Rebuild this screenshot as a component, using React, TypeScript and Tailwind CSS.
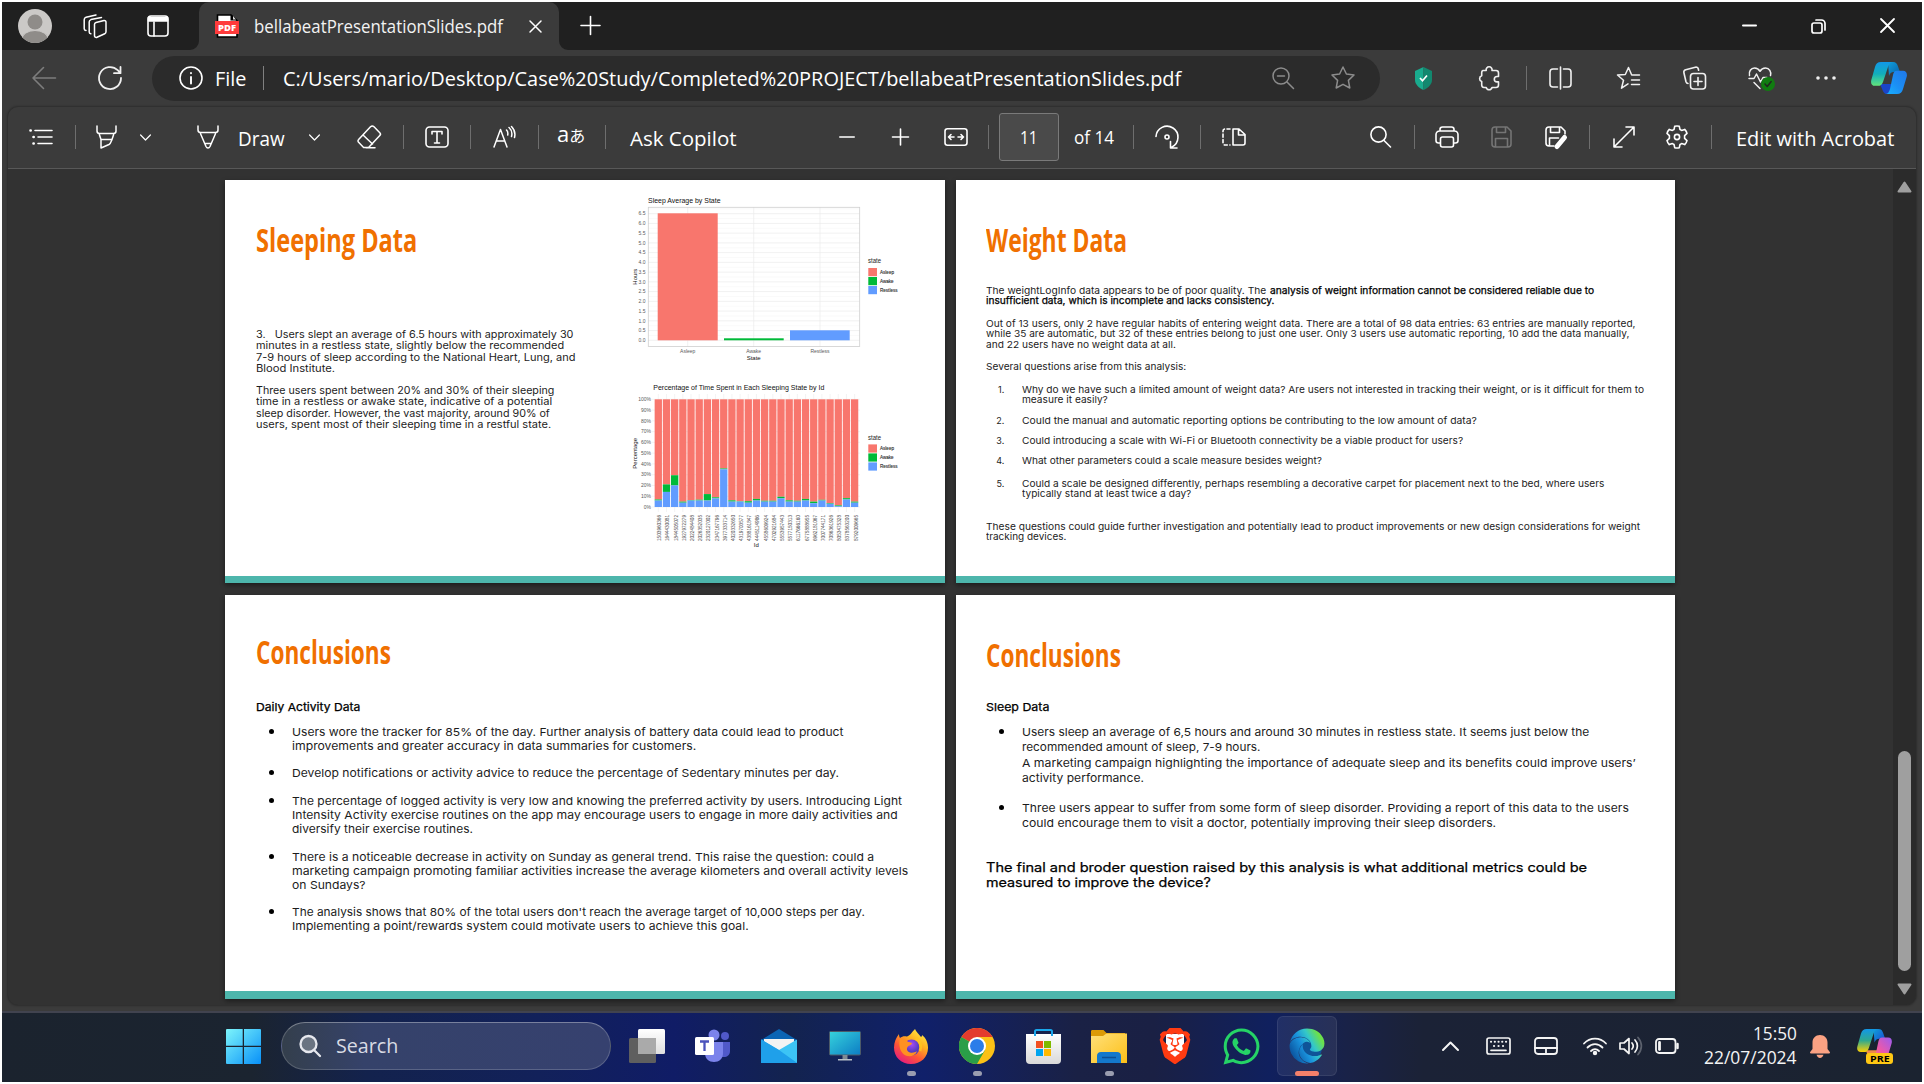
import { useLayoutEffect, useRef, useState } from 'react';
import type { ReactNode } from 'react';
import { FaWhatsapp, FaEdge } from 'react-icons/fa';
import { SiBrave } from 'react-icons/si';

/* Text stretched horizontally so that it fills a given width. */
function Fit({ w, className = '', children }: { w: number; className?: string; children: ReactNode }) {
  const ref = useRef<HTMLSpanElement>(null);
  const [scale, setScale] = useState(1);
  useLayoutEffect(() => {
    const measure = () => {
      if (ref.current && ref.current.offsetWidth) setScale(w / ref.current.offsetWidth);
    };
    measure();
    document.fonts?.ready.then(measure);
  }, [w]);
  return (
    <span className={`block shrink-0 whitespace-nowrap ${className}`} style={{ width: w }}>
      <span ref={ref} className="inline-block origin-left align-top" style={{ transform: `scaleX(${scale})` }}>
        {children}
      </span>
    </span>
  );
}

function Icon({ vb, className = '', sw = 1.6, children }: { vb: string; className?: string; sw?: number; children: ReactNode }) {
  return (
    <svg viewBox={vb} className={`shrink-0 overflow-visible ${className}`} fill="none" stroke="currentColor" strokeWidth={sw} strokeLinecap="round" strokeLinejoin="round">
      {children}
    </svg>
  );
}

const Sep = ({ className = '' }: { className?: string }) => <div className={`h-6 w-px shrink-0 bg-[#6e6e6e] ${className}`} />;

function TabStrip() {
  return (
    <div className="flex h-12 items-center bg-[#202020] text-white">
      <svg viewBox="0 0 34 34" className="ml-4 size-[34px] shrink-0">
        <defs><clipPath id="av"><circle cx="17" cy="17" r="17" /></clipPath></defs>
        <g clipPath="url(#av)">
          <rect width="34" height="34" fill="#cbc9c7" />
          <circle cx="17" cy="13" r="7.5" fill="#8f8c89" />
          <ellipse cx="17" cy="30" rx="13" ry="8.5" fill="#8f8c89" stroke="#cbc9c7" strokeWidth="1" />
        </g>
      </svg>
      <Icon vb="0 0 24 24" className="ml-[31px] size-6" sw={1.5}>
        <path d="M11.500 10.300c0-1 .6-1.700 1.500-1.900L21 6.500a1.700 1.700 0 0 1 2 1.700v9.600c0 1-.5 1.600-1.300 2L14 23.300a1.700 1.700 0 0 1-2.500-1.600z" />
        <path d="M7.800 19.800c-1-.2-1.600-.8-1.600-1.800V8c0-1.200.6-2 1.700-2.400L18.500 3.500" />
        <path d="M3 16.500c-1.300-.2-1.800-.8-1.800-1.800V5.700c0-1.200.5-2 1.800-2.400L13 1" />
      </Icon>
      <Icon vb="0 0 22 22" className="ml-10 size-[22px]" sw={1.6}>
        <rect x="1" y="1" width="20" height="20" rx="3" />
        <path d="M1.500 2.500h19v3.500h-19z" fill="currentColor" />
        <path d="M7 7v14" />
      </Icon>
      <div className="relative ml-[30px] flex h-12 w-[360px] items-center rounded-t-[10px] bg-[#3b3b3b] pl-4">
        <svg viewBox="0 0 10 10" className="absolute bottom-0 -left-[9px] size-[9px]"><path d="M10 0v10H0A10 10 0 0 0 10 0z" fill="#3b3b3b" /></svg>
        <svg viewBox="0 0 10 10" className="absolute bottom-0 -right-[9px] size-[9px]"><path d="M0 0v10h10A10 10 0 0 1 0 0z" fill="#3b3b3b" /></svg>
        <svg viewBox="0 0 24 24" className="size-6 shrink-0">
          <path d="M2.500 1h13.500l6 5.500V23h-19.500z" fill="#fff" stroke="#000" strokeWidth="1.600" />
          <path d="M15.500 0v6.500h7z" fill="#000" /><path d="M18 2l3 3.500h-3z" fill="#ddd" />
          <rect y="7" width="24" height="13" fill="#ff3b3b" />
          <text x="12" y="16.600" textAnchor="middle" fontSize="8.400" fontWeight="800" fontFamily="Open Sans, sans-serif" fill="#fff" textLength="18" lengthAdjust="spacingAndGlyphs">PDF</text>
        </svg>
        <Fit w={248.5} className="ml-[15px] text-[18px] leading-6 text-[#f2f2f2]">bellabeatPresentationSlides.pdf</Fit>
        <Icon vb="0 0 13 13" className="ml-[26px] size-[13px]" sw={1.5}><path d="M1 1l11 11M12 1 1 12" /></Icon>
      </div>
      <Icon vb="0 0 21 21" className="ml-[21px] size-[21px]" sw={1.6}><path d="M10.500.5v18M1 9.500h19" /></Icon>
      <Icon vb="0 0 15 15" className="ml-auto size-[15px]" sw={2}><path d="M1 6.500h13" /></Icon>
      <Icon vb="0 0 15 15" className="ml-[54px] size-[15px]" sw={1.7}><rect x="1" y="4" width="10" height="10" rx="2" /><path d="M5 1h5.500A3.500 3.500 0 0 1 14 4.500V11" /></Icon>
      <Icon vb="0 0 15 15" className="mr-[27px] ml-[54px] size-[15px]" sw={1.8}><path d="M1 0l13 13M14 0 1 13" /></Icon>
    </div>
  );
}

const Copilot = ({ id, warm, className }: { id: string; warm?: boolean; className: string }) => (
  <svg viewBox="0 0 36 32" className={`shrink-0 ${className}`}>
    <defs>
      <linearGradient id={`${id}a`} x1="0" y1="0" x2="0" y2="1">
        <stop offset="0" stopColor="#1297e8" /><stop offset=".5" stopColor={warm ? '#2fa98f' : '#12aebb'} /><stop offset="1" stopColor={warm ? '#ffd000' : '#63e57c'} />
      </linearGradient>
      <linearGradient id={`${id}b`} x1="1" y1="0" x2="0" y2="1">
        <stop offset="0" stopColor={warm ? '#9b5cf0' : '#2077e8'} /><stop offset=".55" stopColor={warm ? '#ee59a8' : '#1b8ff5'} /><stop offset="1" stopColor={warm ? '#ff8a5c' : '#18b4ff'} />
      </linearGradient>
      <linearGradient id={`${id}c`} x1="0" y1="0" x2="1" y2="1"><stop offset="0" stopColor="#0f9fdc" /><stop offset="1" stopColor={warm ? '#1c46cf' : '#0a5fa8'} /></linearGradient>
    </defs>
    <path d="M17 0h5c3 0 4 1.500 5 4.500L29 10h-6c-3 0-4 1.500-5 4z" fill={`url(#${id}c)`} />
    <path d="M9 22l9 0 4 0-3 9c-4 2-6 1-7.500-3z" fill={warm ? '#f08a4a' : '#1a45c8'} />
    <path d="M10 0h12c-3 0-4 2-5 5l-5 15c-1 3-2.500 3.800-5 3.800H4C.8 23.800-.5 21.500.3 18L4 5C5 1.800 6.500 0 10 0z" fill={`url(#${id}a)`} />
    <path d="M26 8.800h6c3.200 0 4.500 2.500 3.700 6L32 27c-1 3.200-2.500 5-6 5H14c3 0 4-2 5-5l3-14c.8-3 1.500-4.200 4-4.200z" fill={`url(#${id}b)`} />
  </svg>
);

function AddressBar() {
  return (
    <div className="flex h-[57px] items-center bg-[#3b3b3b] text-[#f0f0f0]">
      <Icon vb="0 0 24 24" className="ml-[30px] size-6 text-[#7d7d7d]" sw={1.6}><path d="M23.500 12H1M11.500 1.500 1 12l10.500 10.500" /></Icon>
      <Icon vb="0 0 24 24" className="ml-[42px] size-6" sw={1.8}><path d="M23 12a11 11 0 1 1-3.300-7.800L22.500 7M22.500 1v6.200h-6.500" /></Icon>
      <div className="ml-[30px] flex h-[45px] w-[1228px] items-center rounded-full bg-[#2b2b2b] pr-[25px] pl-[27px] text-[20.5px] text-white">
        <Icon vb="0 0 24 24" className="size-6" sw={1.6}><circle cx="12" cy="12" r="11" /><path d="M12 11v6.500M12 7v.2" strokeWidth="1.900" /></Icon>
        <Fit w={31} className="ml-3">File</Fit>
        <Sep className="ml-[17px] bg-[#808080]" />
        <Fit w={898.5} className="ml-[19px]">C:/Users/mario/Desktop/Case%20Study/Completed%20PROJECT/bellabeatPresentationSlides.pdf</Fit>
        <Icon vb="0 0 22 22" className="ml-auto size-[22px] text-[#8c8c8c]" sw={1.5}><circle cx="9" cy="9" r="8" /><path d="M15 15l6.500 6.500M5.500 9h7" /></Icon>
        <Icon vb="0 0 24 24" className="ml-[37px] size-6 text-[#8c8c8c]" sw={1.5}><path d="M12 1l3.400 7 7.600 1-5.600 5.400L18.800 22 12 18.300 5.200 22l1.400-7.600L1 9l7.600-1z" /></Icon>
      </div>
      <svg viewBox="0 0 17 23" className="ml-[35px] h-[23px] w-[17px] shrink-0"><path d="M8.500 0L0 4v9c0 4.500 4 8 8.500 10z" fill="#19ab8e" /><path d="M8.500 0L17 4v9c0 4.500-4 8-8.500 10z" fill="#12886f" /><path d="M5 11l2.500 2.800L12 8.500" stroke="#fff" strokeWidth="1.700" fill="none" /></svg>
      <Icon vb="0 0 22 24" className="ml-[46px] h-6 w-[22px]"><path d="M5 4.500h3.200a3 3 0 1 1 5.800 0H18a2.500 2.500 0 0 1 2.500 2.500v3.500h-1.500a2.700 2.700 0 0 0 0 5.400h1.500V19a2.500 2.500 0 0 1-2.500 2.500h-4a3 3 0 0 1-5.800 0H6A2.500 2.500 0 0 1 3.700 19v-3.500a3 3 0 0 1 0-5.700V6.500A2 2 0 0 1 5 4.500z" /></Icon>
      <Sep className="ml-[26px]" />
      <Icon vb="0 0 23 24" className="ml-[22px] h-6 w-[23px]"><path d="M8.500 3H4a3 3 0 0 0-3 3v12a3 3 0 0 0 3 3h4.500M14.500 3H19a3 3 0 0 1 3 3v12a3 3 0 0 1-3 3h-4.500M11.500 1v22" /></Icon>
      <Icon vb="0 0 25 24" className="ml-[44px] h-6 w-[25px]" sw={1.5}><path d="M23.500 9h-7.800l-3.200-7.500L9.300 8.500 1.500 9l6 5.200-2 8 6.500-4.400M15.500 14h8M15.500 18.500h8" /></Icon>
      <Icon vb="0 0 23 24" className="ml-[42px] h-6 w-[23px]"><rect x="7.500" y="7.500" width="15" height="15.500" rx="3" /><path d="M15 11.500v8M11 15.500h8M5 17.500c-1 0-1.700-.7-2-1.700L.9 6.700C.6 5.300 1.300 4.100 2.700 3.700l9.600-2.500c1.500-.4 2.700.4 3 1.800l.3 1.300" /></Icon>
      <Icon vb="0 0 27 25" className="ml-[42px] h-[25px] w-[27px]" sw={1.5}>
        <path d="M1.500 9.500C.5 5.500 3 2 6.500 2c2.800 0 4.500 1.500 5.500 3.300C13 3.500 14.800 2 17.500 2c3.800 0 6 3.700 5 7.500M1 12.500h5l2.500-4.500 4 8 2.500-4.500h4M6 16.500l6 6" />
        <circle cx="20" cy="18" r="7" fill="#107c10" stroke="none" /><path d="M17 18l2.200 2.500 4-5" stroke="#202820" />
      </Icon>
      <svg viewBox="0 0 20 4" className="ml-[41px] h-1 w-5 shrink-0" fill="currentColor"><circle cx="2" cy="2" r="1.800" /><circle cx="10" cy="2" r="1.800" /><circle cx="18" cy="2" r="1.800" /></svg>
      <Copilot id="cp" className="ml-[35px] h-8 w-9" />
    </div>
  );
}

const Chevron = ({ className }: { className: string }) => <Icon vb="0 0 11 7" className={`h-[7px] w-[11px] ${className}`} sw={1.2}><path d="M.6 1l4.900 5 4.900-5" /></Icon>;

function PdfToolbar() {
  return (
    <div className="flex h-[62px] shrink-0 items-center border-b border-[#585858] bg-[#3b3b3b] text-[20.5px] text-white">
      <Icon vb="0 0 24 16" className="ml-[21px] h-4 w-6"><path d="M6 1.500h17M9 8h14M9 14.500h14" /><path d="M1.500 1.500h.2M4.500 8h.2M4.500 14.500h.2" strokeWidth="2.600" /></Icon>
      <Sep className="ml-[22px]" />
      <Icon vb="0 0 21 24" className="ml-5 h-6 w-[21px]" sw={1.5}><path d="M1 1v5c0 1.500 1 2.500 2.500 2.500h14c1.500 0 2.500-1 2.500-2.500V1M3 8.500l2 6h11l2-6M5 14.500V23l8-3.500c1.500-.8 2.200-3 3-5" /></Icon>
      <Chevron className="ml-[23px]" />
      <Icon vb="0 0 22 24" className="ml-[46px] h-6 w-[22px]" sw={1.5}><path d="M1 1v4c0 1.500 1 2.500 2.500 2.500h15c1.500 0 2.500-1 2.500-2.500V1M3 7.500l6 14c1 2 3 2 4 0l6-14M8 18.500h6" /></Icon>
      <Fit w={47} className="ml-[19px] pt-px">Draw</Fit>
      <Chevron className="ml-6" />
      <Icon vb="0 0 24 24" className="ml-[37px] size-6" sw={1.5}><path d="M13.500 1.800 1.600 14.500c-.8.800-.8 2 0 2.800l5 5.200h5L22.800 10.500c.8-.8.800-2 0-2.800L17 1.800c-1-.9-2.500-.9-3.500 0zM6 10l9.500 9M9 22.700h9" /></Icon>
      <Sep className="ml-[22px]" />
      <Icon vb="0 0 24 22" className="ml-[21px] h-[22px] w-6"><rect x="1" y="1" width="22" height="20" rx="3.500" /><path d="M7 8V5.500h10V8M12 5.500V17M9.500 17h5" /></Icon>
      <Sep className="ml-[21px]" />
      <Icon vb="0 0 23 22" className="ml-[22px] h-[22px] w-[23px]" sw={1.5}><path d="M1 21 7.500 3.500 14 21M3.500 15h8M13.500 4c1.200 1.200 1.600 3 1.200 5M16 1.500c2.800 2.500 3.300 6 2.500 9M18.500.5c3 3 4 7 3 11" /></Icon>
      <Sep className="ml-[22px]" />
      <Fit w={28} className="ml-[18px] pb-1.5 text-[22px] leading-6"><span>a</span><span className="font-['Noto_Sans_CJK_JP'] text-[16px]">あ</span></Fit>
      <Sep className="ml-5" />
      <Fit w={107} className="ml-6 pt-px">Ask Copilot</Fit>
      <Icon vb="0 0 16 16" className="ml-[102px] size-4"><path d="M.8 8h14.400" /></Icon>
      <Icon vb="0 0 17 17" className="ml-[37px] size-[17px]"><path d="M.5 8h16M8.500 0v16" /></Icon>
      <Icon vb="0 0 24 18" className="ml-[35px] h-[18px] w-6"><rect x="1" y=".8" width="22" height="16.400" rx="2.500" /><path d="M10 9H4.500M7 6.500 4.500 9 7 11.500M14 9h5.500M17 6.500 19.500 9 17 11.500" /></Icon>
      <Sep className="ml-5" />
      <div className="ml-2.5 flex h-12 w-[60px] shrink-0 items-center justify-center rounded-[3px] border border-[#7a7a7a] bg-[#4a4a4a] text-[18px]"><Fit w={18}>11</Fit></div>
      <Fit w={40} className="ml-[15px] text-[18px]">of 14</Fit>
      <Sep className="ml-[19px]" />
      <Icon vb="0 0 24 24" className="ml-[21px] size-6"><path d="M1 11.500A11 11 0 1 1 17 22M15.500 16.500V23H22" /><circle cx="12" cy="12" r="2" /></Icon>
      <Sep className="ml-[21px]" />
      <Icon vb="0 0 24 18" className="ml-[21px] h-[18px] w-6"><path d="M11 1h6l6 5.500V15a2 2 0 0 1-2 2H11zM16.500 1v6H23" /><path d="M8 1H3a2 2 0 0 0-2 2v12a2 2 0 0 0 2 2h5" strokeDasharray="3 2.500" /></Icon>
      <Icon vb="0 0 21 22" className="ml-[124px] h-[22px] w-[21px]"><circle cx="8.500" cy="8.500" r="7.600" /><path d="M14 14.500l6.500 6.500" /></Icon>
      <Sep className="ml-[23px]" />
      <Icon vb="0 0 24 22" className="ml-5 h-[22px] w-6"><path d="M5 17H3.500A2.500 2.500 0 0 1 1 14.500V8.500A3.500 3.500 0 0 1 4.500 5h15A3.500 3.500 0 0 1 23 8.500v6a2.500 2.500 0 0 1-2.500 2.500H19M5 5V3.500C5 2 6 1 7.500 1h9C18 1 19 2 19 3.500V5" /><rect x="5.500" y="11" width="13" height="10" rx="2" /></Icon>
      <Icon vb="0 0 21 22" className="ml-8 h-[22px] w-[21px] text-[#757575]"><path d="M1 4a3 3 0 0 1 3-3h12l4 4v13a3 3 0 0 1-3 3H4a3 3 0 0 1-3-3zM5.500 1v5.500h9V1M4.500 21v-8.500h12V21" /></Icon>
      <Icon vb="0 0 22 22" className="ml-[33px] h-[22px] w-[22px]"><path d="M9 20H4a3 3 0 0 1-3-3V4a3 3 0 0 1 3-3h12l4 4v3M5.500 1v5.500h9V1M4.500 20v-8h9" /><path d="M12 20.500 19.500 11.500" strokeWidth="5" /></Icon>
      <Sep className="ml-[22px]" />
      <Icon vb="0 0 22 22" className="ml-[23px] size-[22px]"><path d="M1 21 21 1M13 1h8v8M1 13v8h8" /></Icon>
      <Icon vb="0 0 24 24" className="ml-[30px] size-6"><path d="M9.700 1.300c1.500-.4 3.100-.4 4.600 0l.7 3.200 1.600.9 3.100-1c1.100 1.100 1.900 2.500 2.300 4l-2.400 2.200v2.800l2.400 2.200c-.4 1.500-1.200 2.900-2.300 4l-3.100-1-1.600.9-.7 3.200c-1.500.4-3.100.4-4.600 0L9 19.500l-1.600-.9-3.100 1c-1.100-1.100-1.900-2.500-2.300-4l2.400-2.200v-2.800L2 8.400c.4-1.500 1.200-2.900 2.300-4l3.100 1L9 4.500z" /><circle cx="12" cy="12" r="2.600" /></Icon>
      <Sep className="ml-[22px]" />
      <Fit w={158.5} className="ml-6 pt-px">Edit with Acrobat</Fit>
    </div>
  );
}

/* ---------- charts ---------- */
const RED = '#f8766d';
const GREEN = '#00ba38';
const BLUE = '#619cff';

const nights: [string, number, number][] = [
  ['1503960366', 6, 7], ['1644430081', 14, 21], ['1844505072', 20, 29.5], ['1927972279', 4, 5], ['2022484408', 6, 6.5],
  ['2026352035', 6, 6.8], ['2320127002', 6, 12], ['2347167796', 8, 9], ['3977333714', 35, 35.8], ['4020332650', 5, 6.2],
  ['4319703577', 5, 5.4], ['4388161847', 4, 5.4], ['4445114986', 6, 7.5], ['4558609924', 5, 5.8], ['4702921684', 5, 5.8],
  ['5553957443', 8, 9.5], ['5577150313', 5, 6.2], ['6117666160', 5, 5.8], ['6775888955', 6, 7.5], ['6962181067', 3.5, 5],
  ['7007744171', 6, 6.7], ['7086361926', 3, 3.6], ['8053475328', 0.7, 1.5], ['8378563200', 7, 8.2], ['8792009665', 4, 5],
];

function Legend({ y }: { y: number }) {
  return (
    <g fill="#222">
      <text x="868" y={y} fontSize="6.500" textLength="13" lengthAdjust="spacingAndGlyphs">state</text>
      {[['Asleep', RED, 14], ['Awake', GREEN, 13.5], ['Restless', BLUE, 17.5]].map(([n, c, w], i) => (
        <g key={n}>
          <rect x="868.300" y={y + 4.7 + i * 9} width="8.700" height="8.200" fill={c as string} />
          <text x="880" y={y + 10.5 + i * 9} fontSize="5" textLength={w} lengthAdjust="spacingAndGlyphs" stroke="#222" strokeWidth=".1">{n}</text>
        </g>
      ))}
    </g>
  );
}

function Charts() {
  const y1 = (v: number) => 340.3 - v * 19.48;
  const y2 = (p: number) => 507 - p * 1.077;
  return (
    <svg viewBox="625 190 320 370" className="mt-2.5 h-[370px] w-[320px] shrink-0" fontFamily="Liberation Sans, Arial, sans-serif">
      <text x="648" y="203" fontSize="7.300" textLength="72.500" lengthAdjust="spacingAndGlyphs" fill="#111">Sleep Average by State</text>
      {Array.from({ length: 14 }, (_, i) => (
        <g key={i}>
          <path d={`M648 ${y1(i / 2)}H859.700`} stroke="#ebebeb" strokeWidth=".7" />
          <path d={`M648 ${y1(i / 2 + 0.25)}H859.700`} stroke="#f4f4f4" strokeWidth=".5" />
          <text x="645.500" y={y1(i / 2) + 1.8} fontSize="5" textAnchor="end" fill="#5a5a5a">{(i / 2).toFixed(1)}</text>
        </g>
      ))}
      <path d="M687.700 207v140M753.700 207v140M820 207v140" stroke="#ebebeb" strokeWidth=".7" />
      <rect x="648.300" y="207.300" width="211.400" height="139.200" fill="none" stroke="#cfcfcf" strokeWidth=".8" />
      <rect x="657.700" y="213.300" width="60" height="127" fill={RED} />
      <rect x="724" y="338.300" width="59.700" height="2" fill={GREEN} />
      <rect x="790" y="330.300" width="59.700" height="10" fill={BLUE} />
      <g fontSize="5" textAnchor="middle" fill="#5a5a5a">
        <text x="687.700" y="352.800">Asleep</text><text x="753.700" y="352.800">Awake</text><text x="820" y="352.800">Restless</text>
      </g>
      <text x="753.700" y="359.700" fontSize="6" textAnchor="middle" fill="#111">State</text>
      <text transform="translate(636.500 276.700) rotate(-90)" fontSize="6" textAnchor="middle" fill="#111">Hours</text>
      <Legend y={263.3} />

      <text x="653.300" y="389.500" fontSize="7.300" textLength="171" lengthAdjust="spacingAndGlyphs" fill="#111">Percentage of Time Spent in Each Sleeping State by Id</text>
      {Array.from({ length: 11 }, (_, i) => (
        <g key={i}>
          <path d={`M652 ${y2(i * 10)}H860`} stroke="#ebebeb" strokeWidth=".6" />
          <text x="651" y={y2(i * 10) + 1.8} fontSize="5" textAnchor="end" fill="#5a5a5a">{i * 10}%</text>
        </g>
      ))}
      {nights.map(([id, restless, awake], i) => {
        const cx = 658.3 + i * 8.18;
        return (
          <g key={id}>
            <path d={`M${cx} 394V512`} stroke="#ebebeb" strokeWidth=".6" />
            <rect x={cx - 3.65} y={y2(100)} width="7.300" height={y2(awake) - y2(100)} fill={RED} />
            <rect x={cx - 3.65} y={y2(awake)} width="7.300" height={y2(restless) - y2(awake)} fill={GREEN} />
            <rect x={cx - 3.65} y={y2(restless)} width="7.300" height={y2(0) - y2(restless)} fill={BLUE} />
            <text transform={`translate(${cx + 3} 541) rotate(-90)`} fontSize="4.800" textLength="26" lengthAdjust="spacingAndGlyphs" fill="#4a4a4a">{id}</text>
          </g>
        );
      })}
      <text x="756.300" y="546.500" fontSize="6" textAnchor="middle" fill="#111">Id</text>
      <text transform="translate(636.500 453.300) rotate(-90)" fontSize="6" textAnchor="middle" fill="#111">Percentage</text>
      <Legend y={439.7} />
    </svg>
  );
}

/* ---------- slides ---------- */
const Title = ({ w, children }: { w: number; children: string }) => (
  <Fit w={w} className="h-10 font-['Open_Sans'] text-[31.5px] leading-10 font-bold text-[#f07000]">{children}</Fit>
);

type L = [string, number];
const Lines = ({ lines, className = '' }: { lines: L[]; className?: string }) => (
  <div className={className}>{lines.map(([t, w]) => <Fit key={t} w={w}>{t}</Fit>)}</div>
);
const Bullet = ({ lines, className = '' }: { lines: L[]; className?: string }) => (
  <div className={`flex ${className}`}>
    <div className="mt-[4.5px] mr-[18.5px] ml-[12.5px] size-[5px] shrink-0 rounded-full bg-black" />
    <Lines lines={lines} />
  </div>
);
const Numbered = ({ n, lines, className = '' }: { n: number; lines: L[]; className?: string }) => (
  <div className={`flex ${className}`}>
    <div className="mr-[18px] w-[18px] shrink-0 text-right text-[9px]">{n}.</div>
    <Lines lines={lines} />
  </div>
);

const slide = "flex flex-col justify-between bg-white text-[#1c1c1c] shadow-[0_2px_5px_rgba(0,0,0,0.45)] font-['Inter']";
const strong = 'text-black [-webkit-text-stroke:0.25px_#000]';

function Slides() {
  return (
    <div className="grid w-[1450px] grid-cols-[720px_719px] grid-rows-[403px_404px] gap-x-[11px] gap-y-3">
      <section className={slide}>
        <div className="flex h-[396px] justify-between">
          <div className="pt-10 pl-[30.5px] text-[10.5px] leading-[11.6px]">
            <Title w={161}>Sleeping Data</Title>
            <Lines className="mt-[68.6px] whitespace-pre" lines={[['3.\u00a0\u00a0\u00a0Users slept an average of 6.5 hours with approximately 30', 317], ['minutes in a restless state, slightly below the recommended', 308], ['7-9 hours of sleep according to the National Heart, Lung, and', 320], ['Blood Institute.', 79]]} />
            <Lines className="mt-[9.6px]" lines={[['Three users spent between 20% and 30% of their sleeping', 298], ['time in a restless or awake state, indicative of a potential', 296], ['sleep disorder. However, the vast majority, around 90% of', 294], ['users, spent most of their sleeping time in a restful state.', 295]]} />
          </div>
          <Charts />
        </div>
        <div className="h-[7px] bg-[#4db6ac]" />
      </section>

      <section className={slide}>
        <div className="pt-10 pl-[30.3px] text-[9.6px] leading-[10px]">
          <Title w={141}>Weight Data</Title>
          <div className="mt-[26px] flex">
            <Fit w={280.5} className="mr-[3px]">The weightLogInfo data appears to be of poor quality. The</Fit>
            <Fit w={324} className={strong}>analysis of weight information cannot be considered reliable due to</Fit>
          </div>
          <Fit w={288.4} className={strong}>insufficient data, which is incomplete and lacks consistency.</Fit>
          <Lines className="mt-[13px] leading-[10.5px]" lines={[['Out of 13 users, only 2 have regular habits of entering weight data. There are a total of 98 data entries: 63 entries are manually reported,', 649.5], ['while 35 are automatic, but 32 of these entries belong to just one user. Only 3 users use automatic reporting, 10 add the data manually,', 643], ['and 22 users have no weight data at all.', 190]]} />
          <Lines className="mt-[11.5px]" lines={[['Several questions arise from this analysis:', 200]]} />
          <Numbered n={1} className="mt-[13px]" lines={[['Why do we have such a limited amount of weight data? Are users not interested in tracking their weight, or is it difficult for them to', 622], ['measure it easily?', 85.5]]} />
          <Numbered n={2} className="mt-[11px]" lines={[['Could the manual and automatic reporting options be contributing to the low amount of data?', 454.5]]} />
          <Numbered n={3} className="mt-2.5" lines={[['Could introducing a scale with Wi-Fi or Bluetooth connectivity be a viable product for users?', 441.3]]} />
          <Numbered n={4} className="mt-2.5" lines={[['What other parameters could a scale measure besides weight?', 300]]} />
          <Numbered n={5} className="mt-[13px]" lines={[['Could a scale be designed differently, perhaps resembling a decorative carpet for placement next to the bed, where users', 582], ['typically stand at least twice a day?', 169.5]]} />
          <Lines className="mt-[23px] leading-[10.5px]" lines={[['These questions could guide further investigation and potentially lead to product improvements or new design considerations for weight', 654.5], ['tracking devices.', 80]]} />
        </div>
        <div className="h-[7px] bg-[#4db6ac]" />
      </section>

      <section className={slide}>
        <div className="pt-[37px] pl-[31px] text-[11px] leading-[14px]">
          <Title w={135}>Conclusions</Title>
          <Fit w={104.5} className={`mt-7 ${strong}`}>Daily Activity Data</Fit>
          <Bullet className="mt-[11px]" lines={[['Users wore the tracker for 85% of the day. Further analysis of battery data could lead to product', 552], ['improvements and greater accuracy in data summaries for customers.', 404]]} />
          <Bullet className="mt-[13px]" lines={[['Develop notifications or activity advice to reduce the percentage of Sedentary minutes per day.', 547.5]]} />
          <Bullet className="mt-3.5" lines={[['The percentage of logged activity is very low and knowing the preferred activity by users. Introducing Light', 610.3], ['Intensity Activity exercise routines on the app may encourage users to engage in more daily activities and', 606], ['diversify their exercise routines.', 181]]} />
          <Bullet className="mt-3.5" lines={[['There is a noticeable decrease in activity on Sunday as general trend. This raise the question: could a', 582], ['marketing campaign promoting familiar activities increase the average kilometers and overall activity levels', 616.3], ['on Sundays?', 74]]} />
          <Bullet className="mt-[13px]" lines={[["The analysis shows that 80% of the total users don't reach the average target of 10,000 steps per day.", 573], ['Implementing a point/rewards system could motivate users to achieve this goal.', 456.3]]} />
        </div>
        <div className="h-2 bg-[#4db6ac]" />
      </section>

      <section className={slide}>
        <div className="pt-10 pl-[30.3px] text-[11px] leading-[15px]">
          <Title w={135}>Conclusions</Title>
          <Fit w={63} className={`mt-[25px] ${strong}`}>Sleep Data</Fit>
          <Bullet className="mt-2.5" lines={[['Users sleep an average of 6,5 hours and around 30 minutes in restless state. It seems just below the', 567.3], ['recommended amount of sleep, 7-9 hours.', 239]]} />
          <Lines className="mt-px pl-9" lines={[['A marketing campaign highlighting the importance of adequate sleep and its benefits could improve users’', 614], ['activity performance.', 122]]} />
          <Bullet className="mt-[15px]" lines={[['Three users appear to suffer from some form of sleep disorder. Providing a report of this data to the users', 607], ['could encourage them to visit a doctor, potentially improving their sleep disorders.', 474.3]]} />
          <Lines className={`mt-[29px] text-[12.8px] ${strong}`} lines={[['The final and broder question raised by this analysis is what additional metrics could be', 601.5], ['measured to improve the device?', 225]]} />
        </div>
        <div className="h-2 bg-[#4db6ac]" />
      </section>
    </div>
  );
}

function Viewer() {
  return (
    <div className="flex h-[905px] flex-col bg-[#3b3b3b] px-1.5">
      <div className="flex h-[898px] flex-col overflow-hidden rounded-[10px] bg-[#323232] shadow-[0_0_2px_1px_rgba(0,0,0,0.25)]">
        <PdfToolbar />
        <div className="flex min-h-0 flex-1 justify-between">
          <div className="pt-[11px] pl-[217px]"><Slides /></div>
          <div className="flex w-[23px] flex-col items-center bg-[#2b2b2b] pt-3 pb-2.5">
            <svg viewBox="0 0 15 12" className="h-3 w-[15px]"><path d="M7.500 1.500 13.500 10.500h-12z" fill="#9f9f9f" stroke="#9f9f9f" strokeWidth="2" strokeLinejoin="round" /></svg>
            <div className="mt-auto h-[220px] w-[13px] rounded-full bg-[#9f9f9f]" />
            <svg viewBox="0 0 15 12" className="mt-3 h-3 w-[15px]"><path d="M7.500 10.500 13.500 1.500h-12z" fill="#9f9f9f" stroke="#9f9f9f" strokeWidth="2" strokeLinejoin="round" /></svg>
          </div>
        </div>
      </div>
    </div>
  );
}

/* ---------- taskbar ---------- */
function Cell({ children, dot }: { children: ReactNode; dot?: boolean }) {
  return (
    <div className="relative flex h-[70px] w-[66px] shrink-0 items-center justify-center pb-[3px]">
      {children}
      {dot && <div className="absolute bottom-[7px] h-[5px] w-[9px] rounded-full bg-[#9a9db0]" />}
    </div>
  );
}

function Taskbar() {
  return (
    <div className="flex h-[71px] items-center border-t-2 border-[#41434f] bg-[linear-gradient(90deg,#1b232e_0%,#1b2430_13%,#13224d_19%,#12215a_28%,#101c66_35%,#13234f_41%,#10206a_48%,#1a2145_56%,#1a2044_60%,#10205e_66%,#192248_70%,#1b2236_74%,#1b2330_100%)]">
      <svg viewBox="0 0 35 35" className="mb-[3px] ml-56 size-[35px] shrink-0">
        <defs><linearGradient id="win" x1="0" y1="0" x2="1" y2="1"><stop offset="0" stopColor="#7df5fb" /><stop offset="1" stopColor="#0890f8" /></linearGradient></defs>
        <path d="M1 0h15.700v16.700H0V1a1 1 0 0 1 1-1zM18 0h16a1 1 0 0 1 1 1v15.700H18zM0 18h16.700v17H1a1 1 0 0 1-1-1zM18 18h17v16a1 1 0 0 1-1 1H18z" fill="url(#win)" />
      </svg>
      <div className="mb-[3px] ml-5 flex h-12 w-[330px] shrink-0 items-center rounded-full border border-[#ffffff2e] border-t-[#ffffff55] bg-[linear-gradient(90deg,#343f4c,#35426a_25%,#36416f)] pl-[17px] text-[20px] text-[#d8dbe4]">
        <Icon vb="0 0 22 22" className="size-[22px] text-[#e6e8ee]" sw={2.3}><circle cx="9.500" cy="9" r="8" fill="#6a7482" /><path d="M15 15l6 6" /></Icon>
        <Fit w={62} className="ml-[15px]">Search</Fit>
      </div>
      <div className="ml-[3px] flex">
        <Cell>
          <svg viewBox="0 0 36 34" className="h-[34px] w-9"><defs><linearGradient id="tv" x2="0" y2="1"><stop stopColor="#fff" /><stop offset="1" stopColor="#dedede" /></linearGradient></defs><rect y="9" width="27" height="25" rx="1.500" fill="#5f5f5f" /><rect x="9" width="27" height="25" rx="1.500" fill="url(#tv)" /><path d="M9 9h18v16H9z" fill="#aaa" /></svg>
        </Cell>
        <Cell>
          <svg viewBox="0 0 36 34" className="h-[34px] w-9"><circle cx="30" cy="7" r="4" fill="#5059c9" /><path d="M24 13h11v9c0 4-3 6-6 6h-5z" fill="#5059c9" /><circle cx="19" cy="6" r="5.500" fill="#7b83eb" /><path d="M10 13h18v11c0 6-4 9-9 9s-9-3-9-9z" fill="#7b83eb" /><rect y="8" width="19" height="18" rx="1.500" fill="#fff" /><path d="M5 12.500h9M9.500 12.500V22" stroke="#4b53bc" strokeWidth="2.300" /></svg>
        </Cell>
        <Cell>
          <svg viewBox="0 0 36 34" className="h-[34px] w-9"><path d="M0 11 18 0l18 11v6H0z" fill="#0a64b4" /><path d="M3 10h30v14H3z" fill="#f3f3f3" /><path d="M0 10.500 18 21l18-10.500V34H0z" fill="#3cc4f5" /><path d="M0 10.500 36 34H0z" fill="#1e93e4" /><path d="M0 10.500 18 21 36 34H0z" fill="#1fa0ea" /></svg>
        </Cell>
        <Cell>
          <svg viewBox="0 0 32 30" className="h-[30px] w-8"><defs><linearGradient id="mon" x2="1" y2="1"><stop stopColor="#36d3dc" /><stop offset="1" stopColor="#0c7cc4" /></linearGradient></defs><rect x=".5" y=".5" width="31" height="23.500" rx="1" fill="url(#mon)" stroke="#4c5a68" /><path d="M13.500 24h5v4h-5z" fill="#7f8a94" /><path d="M9 28h14v1.500H9z" fill="#b8c0c8" /></svg>
        </Cell>
        <Cell dot>
          <svg viewBox="0 0 34 35" className="h-[35px] w-[34px]">
            <defs>
              <linearGradient id="ff" x1=".85" y1="0" x2=".2" y2="1"><stop stopColor="#fff14a" /><stop offset=".35" stopColor="#ffb11f" /><stop offset=".65" stopColor="#ff5635" /><stop offset="1" stopColor="#e31587" /></linearGradient>
              <radialGradient id="ffp" cx=".5" cy=".3"><stop stopColor="#a94bf5" /><stop offset="1" stopColor="#4f3bbf" /></radialGradient>
            </defs>
            <path d="M21 0c1 3 4 5 6 8 1-.5 1-1.500 1-2 4 3 6 8 6 13 0 9-7 16-17 16S0 28 0 18.500C0 13 2 9 5 5c0 2 .5 3 1 4 2-1.500 4-2 6.500-1.500C16 7 18 3 21 0z" fill="url(#ff)" />
            <circle cx="17.500" cy="18.500" r="8" fill="url(#ffp)" />
            <path d="M6 10c3-1 7 1 8 3 1.500 0 3.500.5 4 1.500-.5 1.500-3 2-4 3-2 2-1 5 2 6 3 .8 5-.5 7-1-2 5-9 6-13 3C5.500 22 4.500 15 6 10z" fill="#ff9121" />
            <path d="M22 9c4 3 6 8 4 13" stroke="#ffc61f" strokeWidth="3" fill="none" opacity=".8" />
          </svg>
        </Cell>
        <Cell dot>
          <svg viewBox="-18 -18 36 36" className="size-9">
            <circle r="18" fill="#fbc116" />
            <path d="M0 0-15.600-9A18 18 0 0 1 15.600-9H0z" fill="#e33b2e" />
            <path d="M0 0-15.600-9A18 18 0 0 0 0 18L7.800 4.500z" fill="#2a9e48" />
            <circle r="9" fill="#fff" /><circle r="7" fill="#2b7de9" />
          </svg>
        </Cell>
        <Cell>
          <svg viewBox="0 0 35 35" className="size-[35px]"><defs><linearGradient id="st" x2="0" y2="1"><stop stopColor="#fff" /><stop offset="1" stopColor="#d9d9d9" /></linearGradient></defs><path d="M0 5h35v26a4 4 0 0 1-4 4H4a4 4 0 0 1-4-4z" fill="url(#st)" /><path d="M9 7V2.500Q9 1 10.500 1h14Q26 1 26 2.500V7" fill="none" stroke="#1aa7ec" strokeWidth="2" /><path d="M10 12h7v7h-7z" fill="#f25022" /><path d="M18 12h7v7h-7z" fill="#7fba00" /><path d="M10 20h7v7h-7z" fill="#00a4ef" /><path d="M18 20h7v7h-7z" fill="#ffb900" /></svg>
        </Cell>
        <Cell dot>
          <svg viewBox="0 0 36 33" className="h-[33px] w-9"><defs><linearGradient id="fo" x2="1" y2="1"><stop stopColor="#ffe07a" /><stop offset="1" stopColor="#fcbf17" /></linearGradient></defs><path d="M0 1.500C0 .5.500 0 1.500 0h11l3 3H34v6H0z" fill="#dc9a06" /><path d="M0 6h12l3.500-2.500H36V33H0z" fill="url(#fo)" /><path d="M6 33v-7c0-2.500 1.500-4 4-4h16c2.500 0 4 1.500 4 4v7z" fill="#1478cc" /><path d="M11 27.500h14" stroke="#0c4f94" strokeWidth="1.500" /></svg>
        </Cell>
        <Cell>
          <div className="relative size-9">
            <div className="absolute inset-x-[9px] inset-y-[6px] rounded-b-full bg-white" />
            <SiBrave className="relative size-9 text-[#ff3b12]" />
          </div>
        </Cell>
        <Cell><FaWhatsapp className="size-[41px] text-[#25d366]" /></Cell>
        <div className="relative flex h-[70px] w-[66px] items-center justify-center pb-[3px]">
          <div className="absolute top-[3px] h-[60px] w-[60px] rounded-md border border-[#ffffff14] bg-[#ffffff12]" />
          <svg className="absolute size-0"><defs><linearGradient id="edg" x1=".9" y1=".3" x2=".1" y2=".75"><stop stopColor="#6be04b" /><stop offset=".3" stopColor="#34c8c8" /><stop offset=".6" stopColor="#1a93dd" /><stop offset="1" stopColor="#0c59a4" /></linearGradient></defs></svg>
          <div className="absolute top-[23px] left-[24px] size-6 rounded-full bg-[#0f5498]" />
          <FaEdge className="relative size-9" fill="url(#edg)" />
          <div className="absolute bottom-[7px] h-[5px] w-6 rounded-full bg-[#f4806a]" />
        </div>
      </div>
      <div className="mr-[30px] ml-auto flex items-center pb-[3px] text-[#f4f4f4]">
        <Icon vb="0 0 17 10" className="h-2.5 w-[17px]" sw={2}><path d="M1 9l7.500-7.500L16 9" /></Icon>
        <Icon vb="0 0 25 18" className="ml-[27px] h-[18px] w-[25px]" sw={1.7}><rect x="1" y="1" width="23" height="16" rx="2" /><path d="M5 13.300h15" /><path d="M5 4.800h.1M8.800 4.800h.1M12.500 4.800h.1M16.200 4.800h.1M20 4.800h.1M8 9h.1M12.500 9h.1M17 9h.1" strokeWidth="2.100" /></Icon>
        <Icon vb="0 0 24 18" className="ml-[23px] h-[18px] w-6" sw={1.8}><rect x="1" y="1" width="22" height="16" rx="3" /><path d="M1 11h22M12 11v6" /></Icon>
        <Icon vb="0 0 24 18" className="ml-[25px] h-[18px] w-6" sw={1.8}><path d="M1 6.500c6-6.500 16-6.500 22 0M4.500 10.500c4.500-4.600 10.500-4.600 15 0M8 14c2.500-2.500 5.500-2.500 8 0" /><circle cx="12" cy="16" r="1.300" fill="currentColor" /></Icon>
        <Icon vb="0 0 23 18" className="ml-3 h-[18px] w-[23px]" sw={1.7}><path d="M1 6v6h4l5 4.500v-15L5 6zM13 6c1.500 1.800 1.500 4.200 0 6M16 3c3.200 3.500 3.200 8.500 0 12" /><path d="M19 .5c4.500 5 4.500 12 0 17" opacity=".3" /></Icon>
        <Icon vb="0 0 24 16" className="ml-[13px] h-4 w-6" sw={1.8}><rect x="1" y="1" width="19.500" height="14" rx="3" /><path d="M4.500 4.500v7" strokeWidth="2.800" /><path d="M22.500 6v4" strokeWidth="2.500" /></Icon>
        <div className="ml-[25px] flex w-[93px] flex-col items-end pb-[3px] text-[18px] leading-6"><Fit w={44}>15:50</Fit><Fit w={93}>22/07/2024</Fit></div>
        <svg viewBox="0 0 20 23" className="ml-[13px] h-[23px] w-5" fill="#fba283"><path d="M10 0c4.500 0 7.500 3.300 7.500 7.500v6.500l2.300 3c.5.800.1 1.500-.8 1.500H1c-.9 0-1.300-.7-.8-1.500l2.300-3V7.500C2.500 3.300 5.500 0 10 0zM6.500 19.800h7c-.5 2-1.800 3.200-3.500 3.200s-3-1.200-3.500-3.200z" /></svg>
        <div className="relative ml-[27px] h-[35px] w-[35px]">
          <Copilot id="pre" warm className="h-[31px] w-[35px]" />
          <div className="absolute right-[-1px] bottom-0 flex h-[11px] w-[27px] items-center justify-center rounded-[3px] bg-[#ffc814] text-black"><Fit w={20} className="text-[9px] leading-[11px] font-bold">PRE</Fit></div>
        </div>
      </div>
    </div>
  );
}

export default function App() {
  return (
    <div className="flex h-[1084px] w-[1924px] flex-col overflow-hidden bg-white p-0.5 font-['Open_Sans',sans-serif]">
      <TabStrip />
      <AddressBar />
      <Viewer />
      <Taskbar />
    </div>
  );
}
